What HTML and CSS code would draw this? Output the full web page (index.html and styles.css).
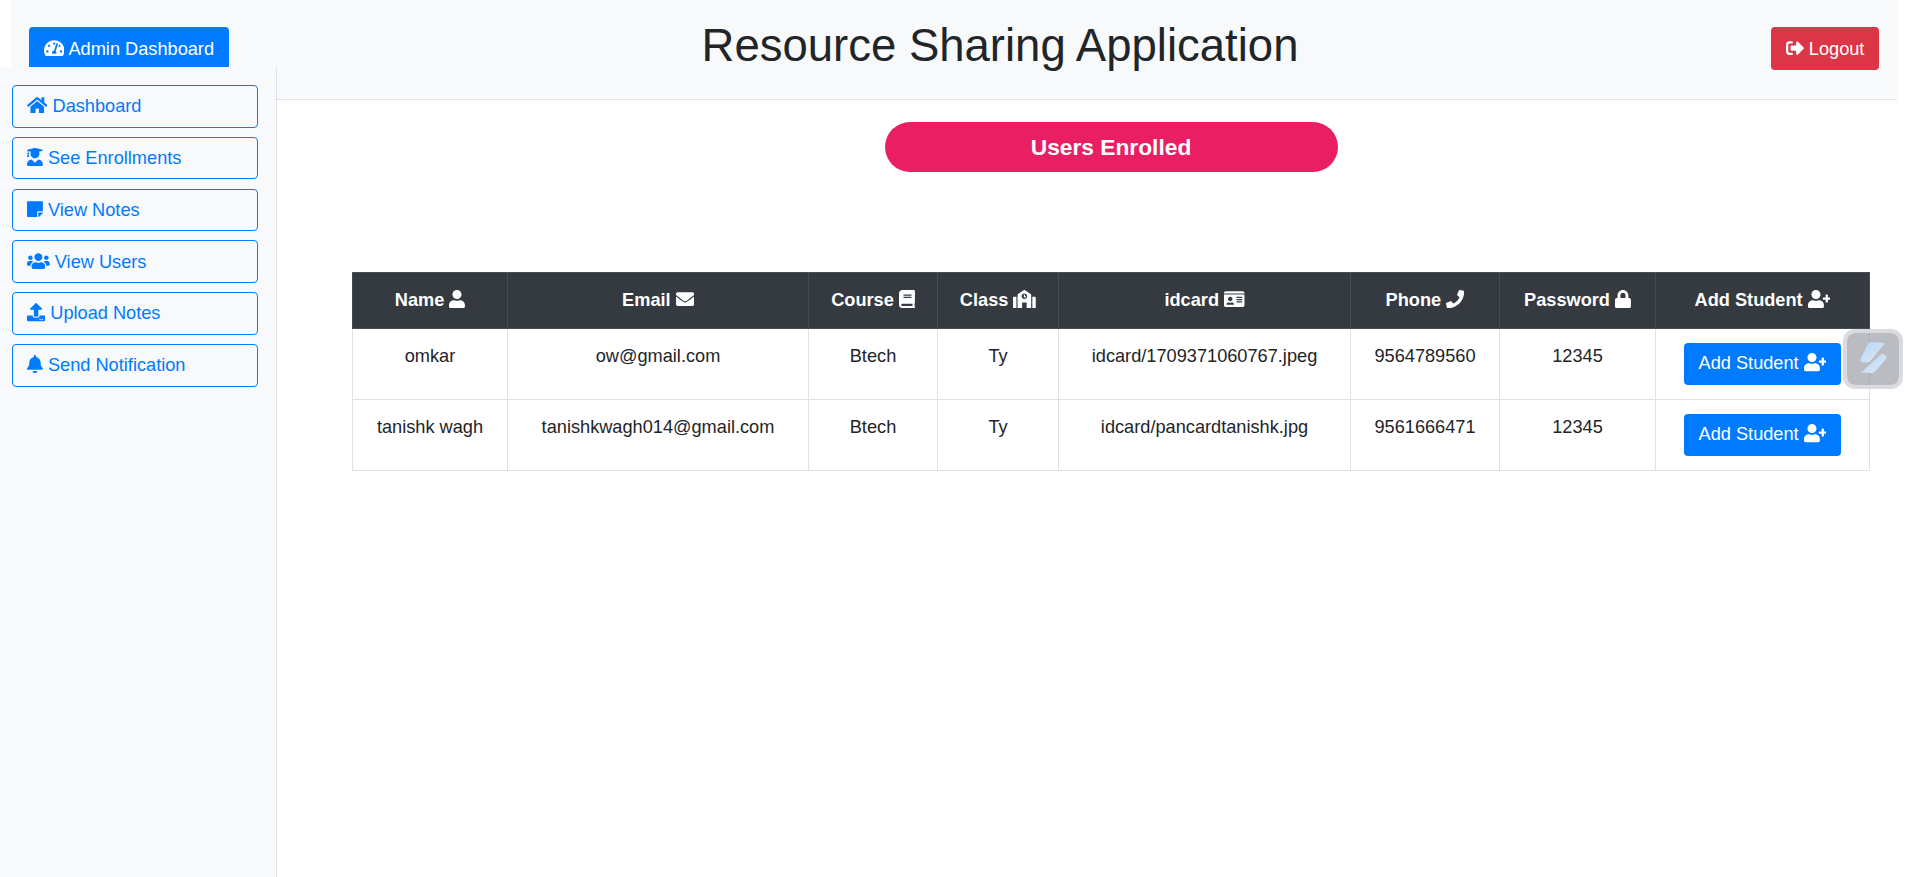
FILE: index.html
```html
<!DOCTYPE html>
<html lang="en">
<head>
    <meta charset="UTF-8">
    <meta name="viewport" content="width=device-width, initial-scale=1.0">
    <title>Resource Sharing Application</title>
    <link rel="stylesheet" href="styles.css">
</head>
<body>
    <svg class="sprite" aria-hidden="true">
        <defs>
            <path id="i-tachometer" d="M288 32C128.94 32 0 160.94 0 320c0 52.8 14.25 102.26 39.06 144.8 5.61 9.62 16.3 15.2 27.44 15.2h443c11.14 0 21.83-5.58 27.44-15.2C561.75 422.26 576 372.8 576 320c0-159.06-128.94-288-288-288zm0 64c14.71 0 26.58 10.13 30.32 23.65-1.11 2.26-2.64 4.23-3.45 6.67l-9.22 27.67c-5.13 3.49-10.97 6.01-17.64 6.01-17.67 0-32-14.33-32-32S270.33 96 288 96zM96 384c-17.67 0-32-14.33-32-32s14.33-32 32-32 32 14.33 32 32-14.33 32-32 32zm48-160c-17.67 0-32-14.33-32-32s14.33-32 32-32 32 14.33 32 32-14.33 32-32 32zm246.77-72.41l-61.33 184C343.13 347.33 352 364.54 352 384c0 11.72-3.38 22.55-8.88 32H232.88c-5.5-9.45-8.88-20.28-8.88-32 0-33.94 26.5-61.43 59.9-63.59l61.34-184.01c4.17-12.56 17.73-19.45 30.36-15.17 12.57 4.19 19.35 17.79 15.17 30.36zm14.66 57.2l15.52-46.55c3.47-1.29 7.13-2.23 11.05-2.23 17.67 0 32 14.33 32 32s-14.33 32-32 32c-11.38-.01-20.89-6.28-26.57-15.22zM480 384c-17.67 0-32-14.33-32-32s14.33-32 32-32 32 14.33 32 32-14.33 32-32 32z"/>
            <path id="i-signout" d="M497 273L329 441c-15 15-41 4.5-41-17v-96H152c-13.3 0-24-10.7-24-24v-96c0-13.3 10.7-24 24-24h136V88c0-21.4 25.9-32 41-17l168 168c9.3 9.4 9.3 24.6 0 34zM192 436v-40c0-6.6-5.4-12-12-12H96c-17.7 0-32-14.3-32-32V160c0-17.7 14.3-32 32-32h84c6.6 0 12-5.4 12-12V76c0-6.6-5.4-12-12-12H96c-53 0-96 43-96 96v192c0 53 43 96 96 96h84c6.6 0 12-5.4 12-12z"/>
            <path id="i-home" d="M280.37 148.26L96 300.11V464a16 16 0 0 0 16 16l112.06-.29a16 16 0 0 0 15.92-16V368a16 16 0 0 1 16-16h64a16 16 0 0 1 16 16v95.64a16 16 0 0 0 16 16.05L464 480a16 16 0 0 0 16-16V300L295.67 148.26a12.19 12.19 0 0 0-15.3 0zM571.6 251.47L488 182.56V44.05a12 12 0 0 0-12-12h-56a12 12 0 0 0-12 12v72.61L318.47 43a48 48 0 0 0-61 0L4.34 251.47a12 12 0 0 0-1.6 16.9l25.5 31A12 12 0 0 0 45.15 301l235.22-193.74a12.19 12.19 0 0 1 15.3 0L530.9 301a12 12 0 0 0 16.9-1.6l25.5-31a12 12 0 0 0-1.7-16.93z"/>
            <path id="i-graduate" d="M319.4 320.6L224 416l-95.4-95.4C57.1 323.7 0 382.2 0 454.4v9.6c0 26.5 21.5 48 48 48h352c26.5 0 48-21.5 48-48v-9.6c0-72.2-57.1-130.7-128.6-133.8zM13.6 79.8l6.4 1.5v58.4c-7 4.2-12 11.5-12 20.3 0 8.4 4.6 15.4 11.1 19.7L3.5 242c-1.7 6.9 2.1 14 7.6 14h41.8c5.5 0 9.3-7.1 7.6-14l-15.6-62.3C51.4 175.4 56 168.4 56 160c0-8.8-5-16.1-12-20.3V87.1l66 15.9c-8.6 17.2-14 36.4-14 57 0 70.7 57.3 128 128 128s128-57.3 128-128c0-20.6-5.3-39.8-14-57l96.3-23.2c18.2-4.4 18.2-27.1 0-31.5l-190.4-46c-13-3.1-26.7-3.1-39.7 0L13.6 48.2c-18.1 4.4-18.1 27.2 0 31.6z"/>
            <path id="i-note" d="M312 320h136V56c0-13.3-10.7-24-24-24H24C10.7 32 0 42.7 0 56v400c0 13.3 10.7 24 24 24h264V344c0-13.2 10.8-24 24-24zm129 55l-98 98c-4.5 4.5-10.6 7-17 7h-6V352h128v6.1c0 6.3-2.5 12.4-7 16.9z"/>
            <path id="i-users" d="M96 224c35.3 0 64-28.7 64-64s-28.7-64-64-64-64 28.7-64 64 28.7 64 64 64zm448 0c35.3 0 64-28.7 64-64s-28.7-64-64-64-64 28.7-64 64 28.7 64 64 64zm32 32h-64c-17.6 0-33.5 7.1-45.1 18.6 40.3 22.1 68.9 62 75.1 109.4h66c17.7 0 32-14.3 32-32v-32c0-35.3-28.7-64-64-64zm-256 0c61.9 0 112-50.1 112-112S381.9 32 320 32 208 82.1 208 144s50.1 112 112 112zm76.8 32h-8.3c-20.8 10-43.9 16-68.5 16s-47.6-6-68.5-16h-8.3C179.6 288 128 339.6 128 403.2V432c0 26.5 21.5 48 48 48h288c26.5 0 48-21.5 48-48v-28.8c0-63.6-51.6-115.2-115.2-115.2zm-223.7-13.4C161.5 263.1 145.6 256 128 256H64c-35.3 0-64 28.7-64 64v32c0 17.7 14.3 32 32 32h65.9c6.3-47.4 34.9-87.3 75.2-109.4z"/>
            <path id="i-upload" d="M296 384h-80c-13.3 0-24-10.7-24-24V192h-87.7c-17.8 0-26.7-21.5-14.1-34.1L242.3 5.7c7.5-7.5 19.8-7.5 27.3 0l152.2 152.2c12.6 12.6 3.7 34.1-14.1 34.1H320v168c0 13.3-10.7 24-24 24zm216-8v112c0 13.3-10.7 24-24 24H24c-13.3 0-24-10.7-24-24V376c0-13.3 10.7-24 24-24h136v8c0 30.9 25.1 56 56 56h80c30.9 0 56-25.1 56-56v-8h136c13.3 0 24 10.7 24 24zm-124 88c0-11-9-20-20-20s-20 9-20 20 9 20 20 20 20-9 20-20zm64 0c0-11-9-20-20-20s-20 9-20 20 9 20 20 20 20-9 20-20z"/>
            <path id="i-bell" d="M224 512c35.32 0 63.97-28.65 63.97-64H160.03c0 35.35 28.65 64 63.97 64zm215.39-149.71c-19.32-20.76-55.47-51.99-55.47-154.29 0-77.7-54.48-139.9-127.94-155.16V32c0-17.67-14.32-32-31.98-32s-31.98 14.33-31.98 32v20.84C118.56 68.1 64.08 130.3 64.08 208c0 102.3-36.15 133.53-55.47 154.29-6 6.45-8.66 14.16-8.61 21.71.11 16.4 12.98 32 32.1 32h383.8c19.12 0 32-15.6 32.1-32 .05-7.55-2.61-15.27-8.61-21.71z"/>
            <path id="i-user" d="M224 256c70.7 0 128-57.3 128-128S294.7 0 224 0 96 57.3 96 128s57.3 128 128 128zm89.6 32h-16.7c-22.2 10.2-46.9 16-72.9 16s-50.6-5.8-72.9-16h-16.7C60.2 288 0 348.2 0 422.4V464c0 26.5 21.5 48 48 48h352c26.5 0 48-21.5 48-48v-41.6c0-74.2-60.2-134.4-134.4-134.4z"/>
            <path id="i-envelope" d="M502.3 190.8c3.9-3.1 9.7-.2 9.7 4.7V400c0 26.5-21.5 48-48 48H48c-26.5 0-48-21.5-48-48V195.6c0-5 5.7-7.8 9.7-4.7 22.4 17.4 52.1 39.5 154.1 113.6 21.1 15.4 56.7 47.8 92.2 47.6 35.7.3 72-32.8 92.3-47.6 102-74.1 131.6-96.3 154-113.7zM256 320c23.2.4 56.6-29.2 73.4-41.4 132.7-96.3 142.8-104.7 173.4-128.7 5.8-4.5 9.2-11.5 9.2-18.9v-19c0-26.5-21.5-48-48-48H48C21.5 64 0 85.5 0 112v19c0 7.4 3.4 14.3 9.2 18.9 30.6 23.9 40.7 32.4 173.4 128.7 16.8 12.2 50.2 41.8 73.4 41.4z"/>
            <path id="i-book" d="M448 360V24c0-13.3-10.7-24-24-24H96C43 0 0 43 0 96v320c0 53 43 96 96 96h328c13.3 0 24-10.7 24-24v-16c0-7.5-3.5-14.3-8.9-18.7-4.2-15.4-4.2-59.3 0-74.7 5.4-4.3 8.9-11.1 8.9-18.6zM128 134c0-3.3 2.7-6 6-6h212c3.3 0 6 2.7 6 6v20c0 3.3-2.7 6-6 6H134c-3.3 0-6-2.7-6-6v-20zm0 64c0-3.3 2.7-6 6-6h212c3.3 0 6 2.7 6 6v20c0 3.3-2.7 6-6 6H134c-3.3 0-6-2.7-6-6v-20zm253.4 250H96c-17.7 0-32-14.3-32-32 0-17.6 14.4-32 32-32h285.4c-1.9 17.1-1.9 46.9 0 64z"/>
            <path id="i-school" d="M0 224v272c0 8.84 7.16 16 16 16h80V192H32c-17.67 0-32 14.33-32 32zm360-48h-24v-40c0-4.42-3.58-8-8-8h-16c-4.42 0-8 3.58-8 8v64c0 4.42 3.58 8 8 8h48c4.42 0 8-3.58 8-8v-16c0-4.42-3.58-8-8-8zm137.75-63.96l-160-106.67a32.02 32.02 0 0 0-35.5 0l-160 106.67A32.002 32.002 0 0 0 128 138.66V512h128V368c0-8.84 7.16-16 16-16h96c8.84 0 16 7.16 16 16v144h128V138.67c0-10.7-5.35-20.7-14.25-26.63zM320 256c-44.18 0-80-35.82-80-80s35.82-80 80-80 80 35.82 80 80-35.82 80-80 80zm288-64h-64v320h80c8.84 0 16-7.16 16-16V224c0-17.67-14.33-32-32-32z"/>
            <path id="i-idcard" d="M528 32H48C21.5 32 0 53.5 0 80v16h576V80c0-26.5-21.5-48-48-48zM0 432c0 26.5 21.5 48 48 48h480c26.5 0 48-21.5 48-48V128H0v304zm352-232c0-4.4 3.6-8 8-8h144c4.4 0 8 3.6 8 8v16c0 4.4-3.6 8-8 8H360c-4.4 0-8-3.6-8-8v-16zm0 64c0-4.4 3.6-8 8-8h144c4.4 0 8 3.6 8 8v16c0 4.4-3.6 8-8 8H360c-4.4 0-8-3.6-8-8v-16zm0 64c0-4.4 3.6-8 8-8h144c4.4 0 8 3.6 8 8v16c0 4.4-3.6 8-8 8H360c-4.4 0-8-3.6-8-8v-16zM176 192c35.3 0 64 28.7 64 64s-28.7 64-64 64-64-28.7-64-64 28.7-64 64-64zM67.1 396.2C75.5 370.5 99.6 352 128 352h8.2c12.3 5.1 25.7 8 39.8 8s27.6-2.9 39.8-8h8.2c28.4 0 52.5 18.5 60.9 44.2 3.2 9.9-5.2 19.8-15.6 19.8H82.7c-10.4 0-18.8-10-15.6-19.8z"/>
            <path id="i-phone" d="M493.4 24.6l-104-24c-11.3-2.6-22.9 3.3-27.5 13.9l-48 112c-4.2 9.8-1.4 21.3 6.9 28l60.6 49.6c-36 76.7-98.9 140.5-177.2 177.2l-49.6-60.6c-6.8-8.3-18.2-11.1-28-6.9l-112 48C3.9 366.5-2 378.1.6 389.4l24 104C27.1 504.2 36.7 512 48 512c256.1 0 464-207.5 464-464 0-11.2-7.7-20.9-18.6-23.4z"/>
            <path id="i-lock" d="M400 224h-24v-72C376 68.2 307.8 0 224 0S72 68.2 72 152v72H48c-26.5 0-48 21.5-48 48v192c0 26.5 21.5 48 48 48h352c26.5 0 48-21.5 48-48V272c0-26.5-21.5-48-48-48zm-104 0H152v-72c0-39.7 32.3-72 72-72s72 32.3 72 72v72z"/>
            <path id="i-userplus" d="M624 208h-64v-64c0-8.8-7.2-16-16-16h-32c-8.8 0-16 7.2-16 16v64h-64c-8.8 0-16 7.2-16 16v32c0 8.8 7.2 16 16 16h64v64c0 8.8 7.2 16 16 16h32c8.8 0 16-7.2 16-16v-64h64c8.8 0 16-7.2 16-16v-32c0-8.8-7.2-16-16-16zm-400 48c70.7 0 128-57.3 128-128S294.7 0 224 0 96 57.3 96 128s57.3 128 128 128zm89.6 32h-16.7c-22.2 10.2-46.9 16-72.9 16s-50.6-5.8-72.9-16h-16.7C60.2 288 0 348.2 0 422.4V464c0 26.5 21.5 48 48 48h352c26.5 0 48-21.5 48-48v-41.6c0-74.2-60.2-134.4-134.4-134.4z"/>
        </defs>
    </svg>

    <header class="topbar">
        <a class="brand" href="#"><svg class="icon" viewBox="0 0 576 512"><use href="#i-tachometer"/></svg> Admin Dashboard</a>
        <h1 class="app-title">Resource Sharing Application</h1>
        <a class="logout" href="#"><svg class="icon" viewBox="0 0 512 512"><use href="#i-signout"/></svg> Logout</a>
    </header>

    <div class="layout">
        <aside class="sidebar">
            <a class="side-link" href="#"><svg class="icon" viewBox="0 0 576 512"><use href="#i-home"/></svg> Dashboard</a>
            <a class="side-link" href="#"><svg class="icon" viewBox="0 0 448 512"><use href="#i-graduate"/></svg> See Enrollments</a>
            <a class="side-link" href="#"><svg class="icon" viewBox="0 0 448 512"><use href="#i-note"/></svg> View Notes</a>
            <a class="side-link" href="#"><svg class="icon" viewBox="0 0 640 512"><use href="#i-users"/></svg> View Users</a>
            <a class="side-link" href="#"><svg class="icon" viewBox="0 0 512 512"><use href="#i-upload"/></svg> Upload Notes</a>
            <a class="side-link" href="#"><svg class="icon" viewBox="0 0 448 512"><use href="#i-bell"/></svg> Send Notification</a>
        </aside>

        <main class="content">
            <h2 class="pill">Users Enrolled</h2>

            <table class="users-table">
                <colgroup>
                    <col class="col-name">
                    <col class="col-email">
                    <col class="col-course">
                    <col class="col-class">
                    <col class="col-idcard">
                    <col class="col-phone">
                    <col class="col-password">
                    <col class="col-add">
                </colgroup>
                <thead>
                    <tr>
                        <th>Name <svg class="icon" viewBox="0 0 448 512"><use href="#i-user"/></svg></th>
                        <th>Email <svg class="icon" viewBox="0 0 512 512"><use href="#i-envelope"/></svg></th>
                        <th>Course <svg class="icon" viewBox="0 0 448 512"><use href="#i-book"/></svg></th>
                        <th>Class <svg class="icon" viewBox="0 0 640 512"><use href="#i-school"/></svg></th>
                        <th>idcard <svg class="icon" viewBox="0 0 576 512"><use href="#i-idcard"/></svg></th>
                        <th>Phone <svg class="icon" viewBox="0 0 512 512"><use href="#i-phone"/></svg></th>
                        <th>Password <svg class="icon" viewBox="0 0 448 512"><use href="#i-lock"/></svg></th>
                        <th>Add Student <svg class="icon" viewBox="0 0 640 512"><use href="#i-userplus"/></svg></th>
                    </tr>
                </thead>
                <tbody>
                    <tr>
                        <td>omkar</td>
                        <td>ow@gmail.com</td>
                        <td>Btech</td>
                        <td>Ty</td>
                        <td>idcard/1709371060767.jpeg</td>
                        <td>9564789560</td>
                        <td>12345</td>
                        <td><button class="add-btn">Add Student <svg class="icon" viewBox="0 0 640 512"><use href="#i-userplus"/></svg></button></td>
                    </tr>
                    <tr>
                        <td>tanishk wagh</td>
                        <td>tanishkwagh014@gmail.com</td>
                        <td>Btech</td>
                        <td>Ty</td>
                        <td>idcard/pancardtanishk.jpg</td>
                        <td>9561666471</td>
                        <td>12345</td>
                        <td><button class="add-btn">Add Student <svg class="icon" viewBox="0 0 640 512"><use href="#i-userplus"/></svg></button></td>
                    </tr>
                </tbody>
            </table>
        </main>
    </div>

    <div class="float-widget">
        <svg class="float-logo" viewBox="0 0 52 52">
            <defs>
                <linearGradient id="floatGrad" x1="0" y1="0" x2="1" y2="1">
                    <stop offset="0" stop-color="#b5d6f6"/>
                    <stop offset="1" stop-color="#dfe9f4"/>
                </linearGradient>
            </defs>
            <path fill="url(#floatGrad)" d="M21 10.500c1-1 2-1.500 3.500-1.500L38 10 23 28.500c-.8.900-1.700 1-2.800 1H16c-1 0-2-1-2.200-2-.2-1.200 0-3 1-4.200z"/>
            <path fill="url(#floatGrad)" d="M34 21.500c1.500-.9 3.500-.5 4.500 1 1 1.400 1 3 0 4.300L28 38.600c-.8.900-1.800 1.400-3 1.400l-11-.4z"/>
        </svg>
    </div>
</body>
</html>
```

FILE: styles.css
```css
* {
    box-sizing: border-box;
}

html, body {
    margin: 0;
    height: 100%;
    overflow: hidden;
}

body {
    font-family: "Liberation Sans", Arial, sans-serif;
    font-size: 18.2px;
    line-height: 1.5;
    color: #212529;
    background: #fff;
}

a {
    text-decoration: none;
}

.sprite {
    display: none;
}

.icon {
    height: 1em;
    fill: currentColor;
    vertical-align: -0.125em;
}

.topbar {
    display: flex;
    justify-content: space-between;
    align-items: flex-start;
    height: 100px;
    margin: 0 10px 0 11px;
    padding: 27px 18px 0;
    background: #f8f9fa;
    border-bottom: 1px solid #dee2e6;
}

.brand {
    width: 200px;
    height: 43px;
    padding: 9px 0;
    text-align: center;
    color: #fff;
    background: #007bff;
    border-radius: 4px;
}

.app-title {
    margin: -8px 0 0;
    font-size: 45.5px;
    font-weight: 400;
    line-height: 1.2;
}

.logout {
    width: 108px;
    height: 43px;
    padding: 9px 0;
    text-align: center;
    color: #fff;
    background: #dc3545;
    border-radius: 4px;
}

.layout {
    display: flex;
    height: 810px;
    margin-top: -33px;
}

.sidebar {
    position: relative;
    z-index: 1;
    display: flex;
    flex-direction: column;
    gap: 9.1px;
    flex: 0 0 277px;
    padding: 18px 0 0 12px;
    background: #f8f9fa;
    border-right: 1px solid #dee2e6;
}

.side-link {
    width: 246px;
    height: 42.7px;
    padding: 7.2px 14px;
    color: #007bff;
    border: 1px solid #007bff;
    border-radius: 4px;
}

.content {
    flex: 1;
    padding: 55px 37px 0 75px;
}

.pill {
    width: 453px;
    height: 50px;
    margin: 0 auto 100px;
    font-size: 22.75px;
    font-weight: 700;
    line-height: 50px;
    text-align: center;
    color: #fff;
    background: #e91e63;
    border-radius: 25px;
}

.users-table {
    width: 1517px;
    table-layout: fixed;
    border-collapse: collapse;
    text-align: center;
}

.col-name { width: 155px; }
.col-email { width: 301px; }
.col-course { width: 129px; }
.col-class { width: 121px; }
.col-idcard { width: 292px; }
.col-phone { width: 149px; }
.col-password { width: 156px; }
.col-add { width: 214px; }

.users-table th {
    height: 56px;
    padding: 12px;
    font-weight: 700;
    color: #fff;
    background: #343a40;
    border: 1px solid #454d55;
    border-bottom-width: 1px;
}

.users-table td {
    height: 71px;
    padding: 14px 12px 12px;
    vertical-align: top;
    border: 1px solid #dee2e6;
}

.add-btn {
    display: block;
    height: 42px;
    width: 157px;
    margin: 0 auto;
    padding: 0;
    font: inherit;
    color: #fff;
    background: #007bff;
    border: 0;
    border-radius: 4px;
}

.float-widget {
    position: fixed;
    top: 329px;
    right: 4px;
    display: flex;
    align-items: center;
    justify-content: center;
    width: 60px;
    height: 60px;
    background: rgba(150, 152, 160, 0.65);
    border: 4px solid rgba(205, 207, 213, 0.75);
    border-radius: 12px;
    background-clip: padding-box;
}

.float-logo {
    width: 52px;
    height: 52px;
}
```
